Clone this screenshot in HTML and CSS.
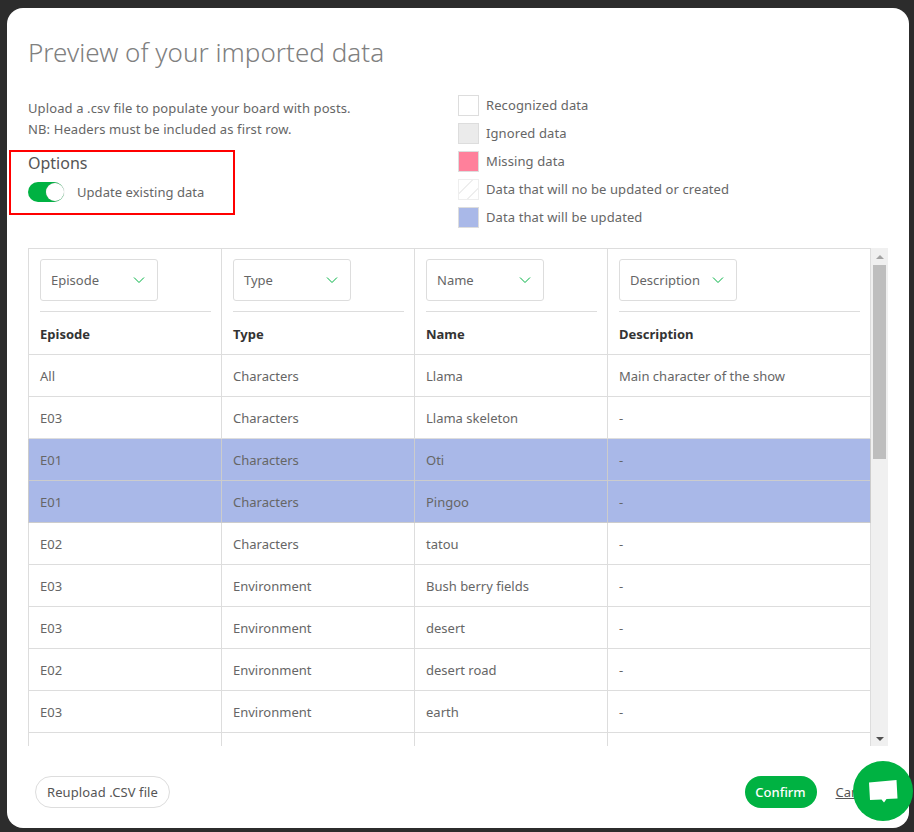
FILE: index.html
```html
<!DOCTYPE html>
<html lang="en">
<head>
    <meta charset="UTF-8">
    <meta name="viewport" content="width=device-width, initial-scale=1.0">
    <title>Preview of your imported data</title>
    <link rel="stylesheet" href="styles.css">
</head>
<body>
    <div class="modal">
        <h1 class="title">Preview of your imported data</h1>

        <div class="intro">
            <div class="intro-left">
                <p class="explain">Upload a .csv file to populate your board with posts.<br>NB: Headers must be included as first row.</p>
                <div class="options">
                    <h2>Options</h2>
                    <div class="toggle-row">
                        <span class="toggle"><span class="knob"></span></span>
                        <span>Update existing data</span>
                    </div>
                </div>
            </div>
            <ul class="legend">
                <li><span class="swatch"></span>Recognized data</li>
                <li><span class="swatch ignored"></span>Ignored data</li>
                <li><span class="swatch missing"></span>Missing data</li>
                <li><span class="swatch hatched"></span>Data that will no be updated or created</li>
                <li><span class="swatch updated"></span>Data that will be updated</li>
            </ul>
        </div>

        <div class="table-wrap">
            <div class="table-clip">
                <table>
                    <thead>
                        <tr class="map-row">
                            <th><div class="select">Episode<svg viewBox="0 0 12 8"><path d="M1 1.5l5 5 5-5"/></svg></div></th>
                            <th><div class="select">Type<svg viewBox="0 0 12 8"><path d="M1 1.5l5 5 5-5"/></svg></div></th>
                            <th><div class="select">Name<svg viewBox="0 0 12 8"><path d="M1 1.5l5 5 5-5"/></svg></div></th>
                            <th class="wide"><div class="select">Description<svg viewBox="0 0 12 8"><path d="M1 1.5l5 5 5-5"/></svg></div></th>
                        </tr>
                        <tr class="name-row">
                            <th><div class="col-name">Episode</div></th>
                            <th><div class="col-name">Type</div></th>
                            <th><div class="col-name">Name</div></th>
                            <th class="wide"><div class="col-name">Description</div></th>
                        </tr>
                    </thead>
                    <tbody>
                        <tr><td>All</td><td>Characters</td><td>Llama</td><td>Main character of the show</td></tr>
                        <tr><td>E03</td><td>Characters</td><td>Llama skeleton</td><td>-</td></tr>
                        <tr class="is-update"><td>E01</td><td>Characters</td><td>Oti</td><td>-</td></tr>
                        <tr class="is-update"><td>E01</td><td>Characters</td><td>Pingoo</td><td>-</td></tr>
                        <tr><td>E02</td><td>Characters</td><td>tatou</td><td>-</td></tr>
                        <tr><td>E03</td><td>Environment</td><td>Bush berry fields</td><td>-</td></tr>
                        <tr><td>E03</td><td>Environment</td><td>desert</td><td>-</td></tr>
                        <tr><td>E02</td><td>Environment</td><td>desert road</td><td>-</td></tr>
                        <tr><td>E03</td><td>Environment</td><td>earth</td><td>-</td></tr>
                        <tr class="cut-row"><td></td><td></td><td></td><td></td></tr>
                    </tbody>
                </table>
            </div>
            <div class="scrollbar">
                <span class="arrow up"></span>
                <span class="thumb"></span>
                <span class="arrow down"></span>
            </div>
        </div>

        <div class="footer">
            <button class="btn-outline">Reupload .CSV file</button>
            <div class="footer-right">
                <button class="btn-confirm">Confirm</button>
                <a class="cancel" href="#">Cancel</a>
            </div>
        </div>
    </div>

    <div class="chat">
        <svg viewBox="0 0 30 24"><path d="M1 3.500L28.500 1 29.500 19.500 18.500 20 16 23.500 13.500 20.500 2 21z"/></svg>
    </div>
</body>
</html>
```

FILE: styles.css
```css
*, *::before {
    box-sizing: border-box;
}
html, body {
    height: 100%;
}
body {
    margin: 0;
    padding: 8px 5px 4px 7px;
    background-color: #2c2c2c;
    font-family: "Noto Sans", "Open Sans", sans-serif;
    font-size: 13px;
    color: #666;
    overflow: hidden;
}
.modal {
    height: 820px;
    padding: 0 21px;
    background-color: white;
    border-radius: 16px;
    display: flex;
    flex-direction: column;
}
.title {
    margin: 24px 0 0;
    font-size: 26px;
    line-height: 40px;
    font-weight: 300;
    letter-spacing: 0.03px;
    color: #808080;
}
.intro {
    display: flex;
    margin-top: 26px;
    height: 150px;
}
.intro-left {
    width: 430px;
}
.explain {
    margin: 0;
    line-height: 21px;
    letter-spacing: 0.11px;
}
.options {
    position: relative;
    margin-top: 12px;
}
/* red annotation drawn on top of the screenshot */
.options::before {
    content: "";
    position: absolute;
    left: -19px;
    top: -2px;
    width: 226px;
    height: 65px;
    border: 2px solid #f00;
}
.options h2 {
    margin: 0;
    font-size: 16px;
    font-weight: 400;
    line-height: 22px;
    color: #555;
}
.toggle-row {
    display: flex;
    align-items: center;
    gap: 13px;
    margin-top: 7px;
    height: 22px;
    letter-spacing: 0.05px;
}
.toggle {
    width: 36px;
    height: 20px;
    border-radius: 10px;
    background-color: #00b242;
    display: flex;
    justify-content: flex-end;
    padding: 1px 0;
}
.knob {
    width: 18px;
    height: 18px;
    border-radius: 50%;
    background-color: white;
    box-shadow: 0 0 1px #999;
}
.legend {
    list-style: none;
    margin: -7px 0 0;
    padding: 0;
    letter-spacing: 0.1px;
}
.legend li {
    display: flex;
    align-items: center;
    gap: 7px;
    height: 28px;
}
.swatch {
    width: 21px;
    height: 21px;
    border: 1px solid #ddd;
    background-color: white;
}
.swatch.ignored {
    background-color: #ebebeb;
}
.swatch.missing {
    background-color: #ff809b;
}
.swatch.updated {
    background-color: #a9b8e8;
}
.swatch.hatched {
    border-color: #eee;
    background: repeating-linear-gradient(135deg, white 0, white 9px, #eee 9px, #eee 10px);
}
.table-wrap {
    display: flex;
    height: 498px;
}
.table-clip {
    width: 843px;
    overflow: hidden;
}
table {
    width: 843px;
    table-layout: fixed;
    border-collapse: separate;
    border-spacing: 0;
}
th, td {
    width: 193px;
    border-right: 1px solid #ddd;
    text-align: left;
    font-weight: 400;
}
th:first-child, td:first-child {
    width: 194px;
    border-left: 1px solid #ddd;
}
th.wide {
    width: 263px;
}
.map-row th {
    height: 63px;
    border-top: 1px solid #ddd;
    padding: 10px 10px 10px 11px;
    vertical-align: top;
}
.name-row th {
    padding: 0 10px 0 11px;
    border-bottom: 1px solid #ddd;
}
.select {
    width: 118px;
    height: 42px;
    padding: 0 11px 0 10px;
    border: 1px solid #ddd;
    border-radius: 3px;
    display: flex;
    align-items: center;
    justify-content: space-between;
    color: #666;
}
.select svg {
    width: 12px;
    height: 8px;
    margin-right: 1px;
    fill: none;
    stroke: #00b242;
    stroke-width: 1;
}
.col-name {
    border-top: 1px solid #ddd;
    height: 43px;
    line-height: 44px;
    font-weight: 700;
    color: #333;
}
td {
    height: 42px;
    padding: 0 11px;
    border-bottom: 1px solid #ddd;
    color: #666;
}
.is-update td {
    background-color: #a9b8e8;
    border-color: #ccc;
}
.scrollbar {
    width: 17px;
    background-color: #f0f0f0;
    display: flex;
    flex-direction: column;
    align-items: center;
}
.thumb {
    width: 13px;
    height: 194px;
    background-color: #bebebe;
}
.arrow {
    width: 0;
    height: 0;
    border-left: 4px solid transparent;
    border-right: 4px solid transparent;
}
.arrow.up {
    margin: 7px 0 6px;
    border-bottom: 4px solid #a3a3a3;
}
.arrow.down {
    margin-top: auto;
    margin-bottom: 5px;
    border-top: 4px solid #505050;
}
.footer {
    display: flex;
    justify-content: space-between;
    align-items: center;
    margin-top: 30px;
    padding: 0 12px 0 7px;
}
.footer-right {
    display: flex;
    align-items: center;
    gap: 19px;
}
button {
    font-family: inherit;
    font-size: 13px;
    height: 32px;
    border-radius: 16px;
    cursor: pointer;
}
.btn-outline {
    width: 135px;
    padding: 0;
    background-color: white;
    border: 1px solid #ddd;
    color: #555;
    letter-spacing: 0.1px;
}
.btn-confirm {
    width: 72px;
    padding: 0;
    background-color: #00b242;
    border: 0;
    color: white;
    font-weight: 500;
}
.cancel {
    color: #555;
}
.chat {
    position: fixed;
    left: 853px;
    top: 761px;
    width: 60px;
    height: 60px;
    border-radius: 50%;
    background-color: #00b242;
    display: flex;
    align-items: center;
    justify-content: center;
}
.chat svg {
    width: 30px;
    height: 24px;
    fill: white;
}
```
